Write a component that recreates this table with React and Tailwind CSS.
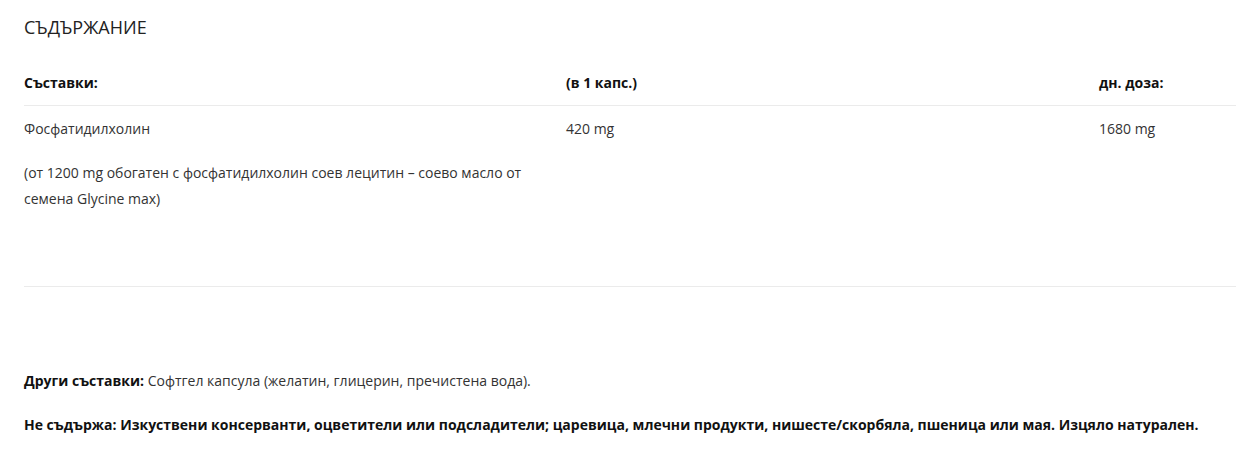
export default function App() {
  return (
    <div className="w-[1236px] h-[456px] bg-white pl-6 text-[14px] leading-[26px] text-[#333]" style={{ fontFamily: '"Open Sans", sans-serif' }}>
      <h2 className="pt-[14px] text-[18px] leading-[26px] text-[#222] font-normal">СЪДЪРЖАНИЕ</h2>
      <div className="mt-[30px] grid grid-cols-[542px_533px_1fr] border-b border-[#ebebeb] pb-[9px] font-bold text-[#111]">
        <div>Съставки:</div>
        <div>(в 1 капс.)</div>
        <div>дн. доза:</div>
      </div>
      <div className="grid grid-cols-[542px_533px_1fr] border-b border-[#ebebeb] pt-[10px] pb-[74px]">
        <div>
          <p>Фосфатидилхолин</p>
          <p className="mt-[18px] w-[520px]">(от 1200 mg обогатен с фосфатидилхолин соев лецитин – соево масло от семена Glycine max)</p>
        </div>
        <div>420 mg</div>
        <div>1680 mg</div>
      </div>
      <p className="mt-[81px]"><span className="font-bold text-[#111]">Други съставки:</span> Софтгел капсула (желатин, глицерин, пречистена вода).</p>
      <p className="mt-[18px] font-bold text-[#111]">Не съдържа: Изкуствени консерванти, оцветители или подсладители; царевица, млечни продукти, нишесте/скорбяла, пшеница или мая. Изцяло натурален.</p>
    </div>
  );
}
